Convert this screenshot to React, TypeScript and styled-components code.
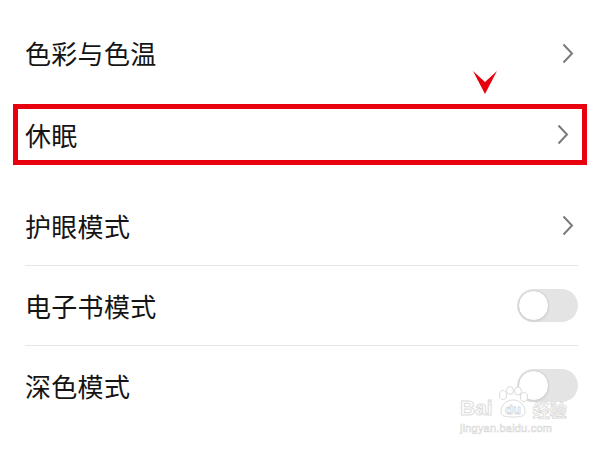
import React from "react";
import styled, { createGlobalStyle } from "styled-components";

const GlobalStyle = createGlobalStyle`
  html, body {
    margin: 0;
    padding: 0;
    background: #ffffff;
  }
  body {
    font-family: "Noto Sans CJK SC", "Noto Sans", sans-serif;
  }
`;

const Page = styled.div`
  position: relative;
  width: 600px;
  height: 450px;
  overflow: hidden;
  background: #fff;
`;

const List = styled.div`
  display: flex;
  flex-direction: column;
  padding: 13px 22px 0 25px;
`;

const Row = styled.div<{ $divider?: boolean; $height?: number }>`
  display: flex;
  align-items: center;
  justify-content: space-between;
  height: ${({ $height }) => $height ?? 79}px;
  border-bottom: ${({ $divider }) => ($divider ? "1px solid #e6e6e6" : "none")};
`;

const Highlight = styled.div`
  display: flex;
  align-items: center;
  justify-content: space-between;
  height: 51px;
  margin: 11px -9px 21px -12px;
  padding: 0 9px 0 7px;
  border: 5px solid #e8000f;
`;

const Label = styled.span`
  font-size: 26px;
  color: #151515;
  letter-spacing: 0.3px;
  line-height: 1;
`;

const ChevronBox = styled.div`
  display: flex;
  align-items: center;
  margin-right: 4px;
`;

const Toggle = styled.div`
  position: relative;
  width: 61px;
  height: 33px;
  border-radius: 17px;
  background: #e4e4e4;
`;

const Knob = styled.div`
  position: absolute;
  left: 1px;
  top: 1px;
  width: 29px;
  height: 29px;
  border-radius: 50%;
  background: #fff;
  border: 1px solid #d2d2d2;
  box-shadow: 0 1px 2px rgba(0, 0, 0, 0.08);
`;

const Marker = styled.div`
  position: absolute;
  left: 473px;
  top: 71px;
  width: 24px;
  height: 23px;
`;

const Watermark = styled.div`
  position: absolute;
  left: 460px;
  top: 386px;
  display: flex;
  flex-direction: column;
  align-items: flex-start;
  color: rgba(255, 255, 255, 0.7);
  font-family: "Liberation Sans", Arial, sans-serif;
`;

const MarkTop = styled.div`
  display: flex;
  align-items: flex-end;
  gap: 2px;
  height: 32px;
`;

const BaiText = styled.span`
  font-size: 21px;
  font-weight: bold;
  color: #fff;
  -webkit-text-stroke: 1px #dcdcdc;
  line-height: 1;
`;

const JingYan = styled.span`
  font-family: "Noto Sans CJK SC", sans-serif;
  font-size: 17px;
  font-weight: bold;
  color: #fff;
  -webkit-text-stroke: 0.8px #dadada;
  line-height: 1;
`;

const Domain = styled.span`
  font-size: 11px;
  color: #fff;
  -webkit-text-stroke: 0.6px #d8d8d8;
  margin-top: 4px;
  letter-spacing: 0.2px;
`;

const Chevron = () => (
  <ChevronBox>
    <svg width="12" height="21" viewBox="0 0 12 21">
      <path d="M1.5 1.5 L10 10.5 L1.5 19.5" fill="none" stroke="#7a7a7a" strokeWidth="2" />
    </svg>
  </ChevronBox>
);

const Switch = () => (
  <Toggle>
    <Knob />
  </Toggle>
);

const Paw = () => (
  <svg width="36" height="32" viewBox="0 0 36 32">
    <g fill="#fff" stroke="#dcdcdc" strokeWidth="1">
      <ellipse cx="8" cy="9" rx="3.5" ry="4.5" />
      <ellipse cx="15" cy="4.5" rx="3.5" ry="4" />
      <ellipse cx="23" cy="5" rx="3.5" ry="4" />
      <ellipse cx="29" cy="11" rx="3.5" ry="4.5" />
      <path d="M6 26 C6 18 12 14 18 14 C24 14 30 18 30 26 C30 30 26 31 18 31 C10 31 6 30 6 26 Z" />
    </g>
    <text x="18" y="28" textAnchor="middle" fontSize="13" fontWeight="bold" fill="#fff" stroke="#d6d6d6" strokeWidth="0.8" fontFamily="Liberation Sans, sans-serif">du</text>
  </svg>
);

export default function App() {
  return (
    <Page>
      <GlobalStyle />
      <List>
        <Row $height={80}>
          <Label>色彩与色温</Label>
          <Chevron />
        </Row>
        <Highlight>
          <Label>休眠</Label>
          <Chevron />
        </Highlight>
        <Row $divider>
          <Label>护眼模式</Label>
          <Chevron />
        </Row>
        <Row $divider>
          <Label>电子书模式</Label>
          <Switch />
        </Row>
        <Row>
          <Label>深色模式</Label>
          <Switch />
        </Row>
      </List>
      <Marker>
        <svg width="24" height="23" viewBox="0 0 24 23">
          <polygon points="0,0 12,11 24,0 12,23" fill="#e8000f" />
        </svg>
      </Marker>
      <Watermark>
        <MarkTop>
          <BaiText>Bai</BaiText>
          <Paw />
          <JingYan>经验</JingYan>
        </MarkTop>
        <Domain>jingyan.baidu.com</Domain>
      </Watermark>
    </Page>
  );
}
